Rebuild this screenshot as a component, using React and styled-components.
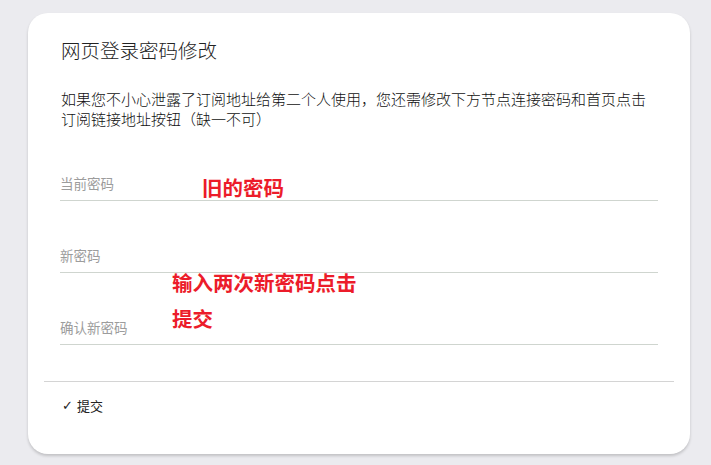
import React from 'react'
import styled, { createGlobalStyle } from 'styled-components'

const GlobalStyle = createGlobalStyle`
  html, body {
    margin: 0;
    padding: 0;
    background: #ebebef;
    font-family: "Noto Sans CJK SC", "Liberation Sans", sans-serif;
  }
`

const fields = [
  { key: 'old', label: '当前密码' },
  { key: 'new', label: '新密码' },
  { key: 'again', label: '确认新密码' },
]

const App = () => {
  return (
    <>
      <GlobalStyle />
      <Page>
        <Card>
          <Body>
            <Title>网页登录密码修改</Title>
            <Desc>
              如果您不小心泄露了订阅地址给第二个人使用，您还需修改下方节点连接密码和首页点击订阅链接地址按钮（缺一不可）
            </Desc>
            <Form>
              {fields.map(f => (
                <Field key={f.key}>
                  <Label>{f.label}</Label>
                </Field>
              ))}
              <Note top={40} left={142}>旧的密码</Note>
              <Note top={135} left={112}>输入两次新密码点击<br />提交</Note>
            </Form>
          </Body>
          <Footer>
            <SubmitBtn>
              <span className='tick'>✓</span>提交
            </SubmitBtn>
          </Footer>
        </Card>
      </Page>
    </>
  )
}

const Page = styled.div`
  width: 711px;
  height: 465px;
  padding: 13px 21px 0 28px;
  box-sizing: border-box;
`

const Card = styled.div`
  width: 662px;
  height: 441px;
  background: #fff;
  border-radius: 20px;
  box-shadow: 0 2px 3px rgba(0, 0, 0, 0.18);
  display: flex;
  flex-direction: column;
  box-sizing: border-box;
`

const Body = styled.div`
  padding: 25px 32px 0 33px;
`

const Title = styled.h2`
  margin: 0;
  font-size: 19.5px;
  line-height: 24px;
  font-weight: 300;
  color: #222;
`

const Desc = styled.p`
  margin: 27px 0 0;
  max-width: 590px;
  font-size: 15px;
  line-height: 20px;
  font-weight: 300;
  color: #111;
`

const Form = styled.div`
  position: relative;
  margin-left: -1px;
`

const Field = styled.div`
  padding: 45px 0 8px;
  border-bottom: 1px solid #cfd5cf;
`

const Label = styled.div`
  font-size: 13.5px;
  line-height: 18px;
  font-weight: 400;
  color: #9c9c9c;
`

const Note = styled.div`
  position: absolute;
  top: ${p => p.top}px;
  left: ${p => p.left}px;
  font-size: 20.5px;
  line-height: 36px;
  font-weight: 700;
  color: #ec1c2a;
`

const Footer = styled.div`
  margin: 36px 16px 0;
  border-top: 1px solid #d4d4d4;
  padding: 15px 0 0 18px;
`

const SubmitBtn = styled.button`
  border: 0;
  background: none;
  padding: 0;
  font-family: inherit;
  font-size: 13px;
  line-height: 18px;
  color: #222;
  display: flex;
  align-items: center;

  .tick {
    font-family: "DejaVu Sans", sans-serif;
    font-size: 13px;
    margin-right: 4px;
  }
`

export default App
